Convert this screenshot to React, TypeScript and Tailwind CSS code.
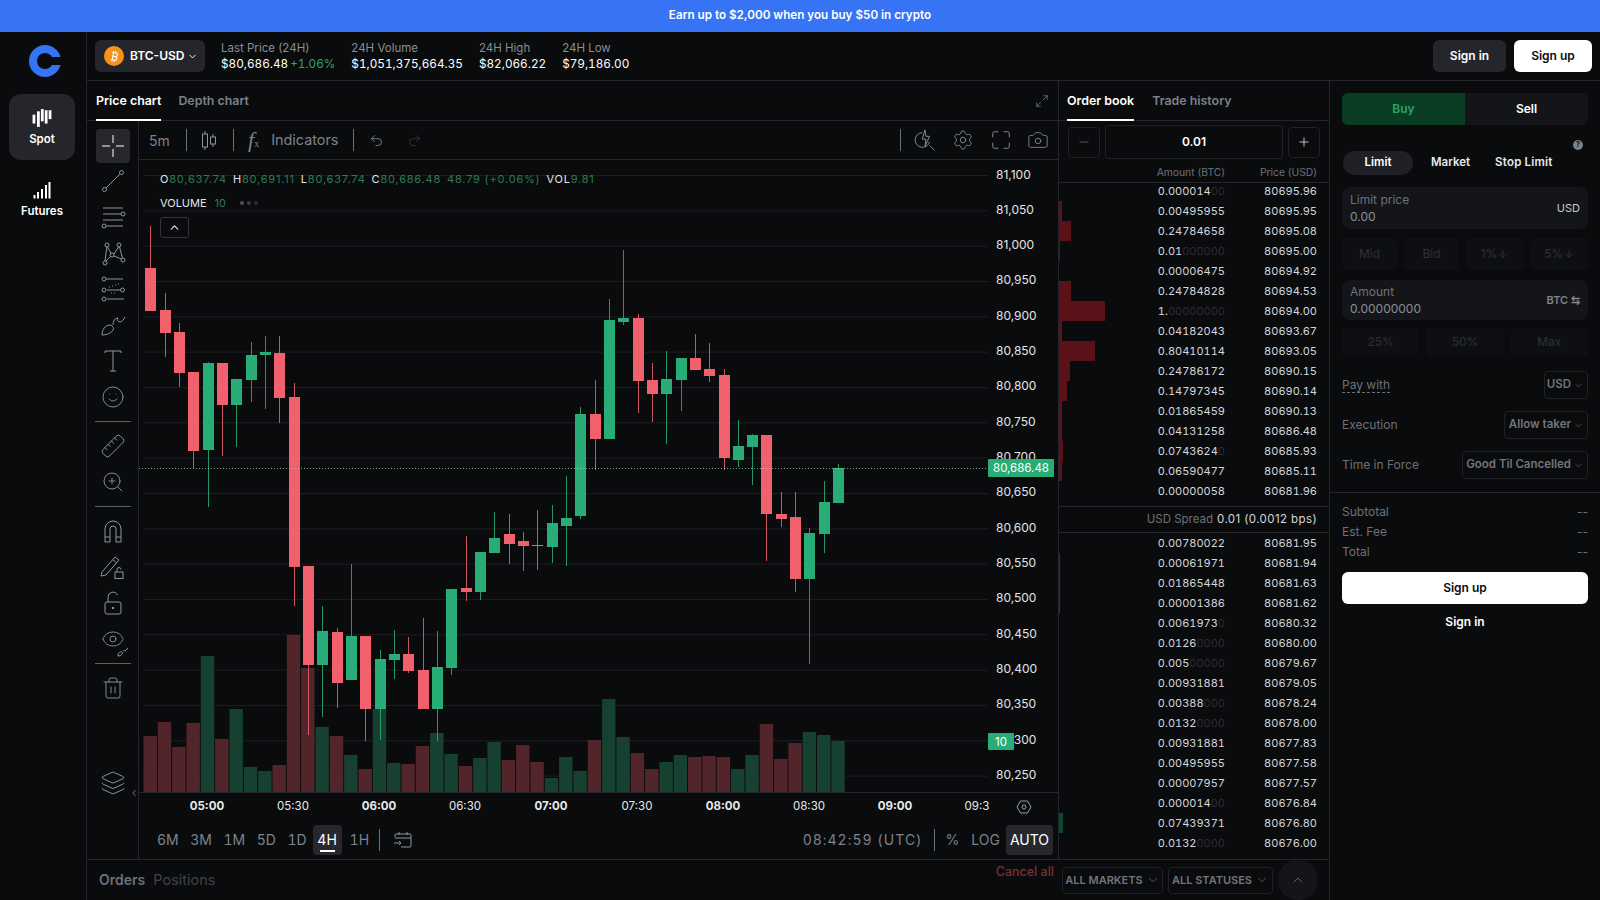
import { Camera, ChevronDown, ChevronUp, Maximize2, Minus, Plus, Redo2, Ruler, Settings, Smile, Trash2, Undo2, Layers, ZoomIn, Bitcoin, ChevronLeft, ArrowDown, Eye } from 'lucide-react';

// wickTop, bodyTop, bodyBottom, wickBottom, up? (page pixels)
const candles: [number, number, number, number, boolean][] = [
  [226, 268, 311, 311, false], [293, 310, 333, 357, false], [323, 332, 373, 387, false], [372, 372, 451, 468, false],
  [362, 363, 450, 507, true], [363, 363, 405, 456, false], [379, 379, 405, 447, true], [342, 355, 380, 402, true],
  [336, 352, 355, 409, true], [336, 353, 398, 423, false], [383, 397, 567, 606, false], [566, 566, 665, 735, false],
  [606, 631, 665, 717, true], [628, 632, 683, 708, false], [564, 636, 680, 680, true], [636, 636, 709, 741, false],
  [650, 659, 709, 740, true], [630, 654, 660, 679, true], [637, 654, 671, 673, false], [618, 670, 709, 709, false],
  [631, 667, 709, 741, true], [589, 589, 668, 675, true], [536, 588, 592, 601, false], [552, 552, 592, 600, true],
  [512, 538, 553, 553, true], [514, 534, 544, 564, false], [532, 541, 546, 571, false], [510, 545, 546, 570, false],
  [505, 523, 547, 563, true], [476, 518, 526, 566, true], [407, 414, 516, 519, true], [380, 414, 439, 470, false],
  [299, 320, 439, 439, true], [250, 318, 322, 325, true], [314, 318, 381, 413, false], [363, 380, 394, 422, false],
  [351, 379, 394, 444, true], [358, 358, 380, 411, true], [334, 358, 370, 370, false], [343, 369, 376, 382, false],
  [369, 375, 458, 470, false], [420, 446, 460, 467, true], [434, 435, 447, 485, true], [435, 435, 514, 561, false],
  [492, 514, 519, 527, false], [492, 517, 579, 592, false], [528, 533, 579, 664, true], [481, 502, 534, 553, true],
  [464, 468, 503, 503, true],
];

const volumes: [number, boolean][] = [
  [736, false], [722, false], [747, false], [723, false], [656, true], [739, false], [709, true], [767, true], [771, true],
  [765, false], [635, false], [668, false], [727, true], [736, false], [755, true], [769, false], [709, true], [763, true],
  [764, false], [746, false], [733, true], [754, true], [766, false], [758, true], [742, true], [760, false], [745, false],
  [762, false], [778, true], [757, true], [771, true], [740, false], [699, true], [737, true], [753, false], [769, false],
  [762, true], [755, true], [757, false], [756, false], [757, false], [769, true], [755, true], [724, false], [759, false],
  [743, false], [732, true], [735, true], [741, true],
];

const prices = ['81,100', '81,050', '81,000', '80,950', '80,900', '80,850', '80,800', '80,750', '80,700', '80,650', '80,600', '80,550', '80,500', '80,450', '80,400', '80,350', '80,300', '80,250'];

const times: [string, number, boolean][] = [
  ['05:00', 207, true], ['05:30', 293, false], ['06:00', 379, true], ['06:30', 465, false], ['07:00', 551, true],
  ['07:30', 637, false], ['08:00', 723, true], ['08:30', 809, false], ['09:00', 895, true], ['09:3', 977, false],
];

type Row = { amount: string; dim?: string; price: string; bar?: number };

const asks: Row[] = [
  { amount: '0.000014', dim: '00', price: '80695.96' },
  { amount: '0.00495955', price: '80695.95', bar: 3 },
  { amount: '0.24784658', price: '80695.08', bar: 12 },
  { amount: '0.01', dim: '000000', price: '80695.00', bar: 1 },
  { amount: '0.00006475', price: '80694.92' },
  { amount: '0.24784828', price: '80694.53', bar: 12 },
  { amount: '1.', dim: '00000000', price: '80694.00', bar: 46 },
  { amount: '0.04182043', price: '80693.67', bar: 3 },
  { amount: '0.80410114', price: '80693.05', bar: 36 },
  { amount: '0.24786172', price: '80690.15', bar: 11 },
  { amount: '0.14797345', price: '80690.14', bar: 8 },
  { amount: '0.01865459', price: '80690.13', bar: 3 },
  { amount: '0.04131258', price: '80686.48', bar: 3 },
  { amount: '0.0743624', dim: '0', price: '80685.93', bar: 4 },
  { amount: '0.06590477', price: '80685.11', bar: 3 },
  { amount: '0.00000058', price: '80681.96' },
];

const bids: Row[] = [
  { amount: '0.00780022', price: '80681.95' },
  { amount: '0.00061971', price: '80681.94', bar: 1 },
  { amount: '0.01865448', price: '80681.63', bar: 1 },
  { amount: '0.00001386', price: '80681.62', bar: 1 },
  { amount: '0.0061973', dim: '0', price: '80680.32' },
  { amount: '0.0126', dim: '0000', price: '80680.00' },
  { amount: '0.005', dim: '00000', price: '80679.67' },
  { amount: '0.00931881', price: '80679.05' },
  { amount: '0.00388', dim: '000', price: '80678.24' },
  { amount: '0.0132', dim: '0000', price: '80678.00' },
  { amount: '0.00931881', price: '80677.83' },
  { amount: '0.00495955', price: '80677.58' },
  { amount: '0.00007957', price: '80677.57' },
  { amount: '0.000014', dim: '00', price: '80676.84' },
  { amount: '0.07439371', price: '80676.80', bar: 4 },
  { amount: '0.0132', dim: '0000', price: '80676.00' },
];

function BookRow({ row, side }: { row: Row; side: 'ask' | 'bid' }) {
  return (
    <div className="relative flex h-5 items-center justify-end pr-[13px] text-[11px] tabular-nums text-[#d5d7dc]">
      {row.bar && (
        <div
          className={`absolute inset-y-0 left-0 ${side === 'ask' ? 'bg-[#5a1218]' : 'bg-[#0b4a30]'}`}
          style={{ width: row.bar }}
        />
      )}
      <span>
        {row.amount}
        <span className="text-[#2a2c32]">{row.dim}</span>
      </span>
      <span className="w-[92px] text-right">{row.price}</span>
    </div>
  );
}

function Chart() {
  const green = '#27ad75';
  const red = '#f0616d';
  return (
    <svg viewBox="139 160 919 660" className="block h-[660px] w-[919px]">
      {prices.map((p, i) => (
        <line key={p} x1={143} x2={988} y1={175.5 + i * 35.33} y2={175.5 + i * 35.33} stroke="#1c1e23" />
      ))}
      {volumes.map(([top, up], i) => (
        <rect key={i} x={143.5 + i * 14.33} y={top} width={13.4} height={792 - top} fill={up ? '#16402f' : '#52252b'} />
      ))}
      {candles.map(([wt, bt, bb, wb, up], i) => {
        const x = Math.round(150.3 + i * 14.33) + 0.5;
        return (
          <g key={i} fill={up ? green : red} stroke={up ? green : red}>
            <line x1={x} x2={x} y1={wt} y2={wb} strokeOpacity={0.85} />
            <rect x={x - 5.5} y={bt} width={11} height={bb - bt} stroke="none" />
          </g>
        );
      })}
      <line x1={139} x2={988} y1={468.5} y2={468.5} stroke="#a9d8c2" strokeOpacity={0.7} strokeDasharray="1 2" />
      {prices.map((p, i) => (
        <text key={p} x={996} y={178.5 + i * 35.33} fill="#e3e5e8" className="text-[12px]">
          {p}
        </text>
      ))}
      <rect x={988} y={459} width={66} height={18} rx={1} fill={green} />
      <text x={1021} y={472} textAnchor="middle" fill="#fff" className="text-[11.5px]">
        80,686.48
      </text>
      <rect x={988} y={733} width={26} height={17} rx={1} fill={green} />
      <text x={1001} y={746} textAnchor="middle" fill="#fff" className="text-[11.5px]">
        10
      </text>
      <line x1={139} x2={1058} y1={792.5} y2={792.5} stroke="#24262c" />
      {times.map(([t, x, bold]) => (
        <text key={t} x={x} y={810} textAnchor="middle" fill="#e8e9ec" className={bold ? 'text-[11.5px] font-bold' : 'text-[11.5px]'}>
          {t}
        </text>
      ))}
      {/* axis settings hex */}
      <path d="M1017 807l3.5-6h7l3.5 6-3.5 6h-7z" fill="none" stroke="#9aa0aa" />
      <circle cx={1024} cy={807} r={2} fill="none" stroke="#9aa0aa" />
    </svg>
  );
}

const toolStroke = { fill: 'none', stroke: '#8f949e', strokeWidth: 1 };

function ToolIcon({ children }: { children: React.ReactNode }) {
  return (
    <svg viewBox="0 0 28 28" className="h-7 w-7" {...toolStroke}>
      {children}
    </svg>
  );
}

function Cell({ children }: { children: React.ReactNode }) {
  return <div className="flex h-9 w-[34px] items-center justify-center text-[#8f949e]">{children}</div>;
}

function Rule() {
  return <div className="my-[6px] h-px w-9 bg-[#5b5f67]" />;
}

function SideTools() {
  return (
    <div className="relative flex w-[52px] shrink-0 flex-col items-center border-r border-[#24262c] pt-2">
      <div className="flex h-[34px] w-[34px] items-center justify-center rounded bg-[#26282e]">
        <svg viewBox="0 0 28 28" className="h-7 w-7" fill="none" stroke="#fff" strokeWidth={1}>
          <path d="M14 3v8M14 17v8M3 14h8M17 14h8" />
        </svg>
      </div>
      <Cell>
        <ToolIcon>
          <path d="M7 21L21 7" />
          <circle cx="5.5" cy="22.5" r="2" />
          <circle cx="22.5" cy="5.5" r="2" />
        </ToolIcon>
      </Cell>
      <Cell>
        <ToolIcon>
          <path d="M4 5h20M4 11h18M4 17h20M7 23h17" />
          <circle cx="24" cy="11" r="2" />
          <circle cx="5" cy="23" r="2" />
        </ToolIcon>
      </Cell>
      <Cell>
        <ToolIcon>
          <circle cx="6" cy="24" r="2" />
          <circle cx="8" cy="6" r="2" />
          <circle cx="13" cy="16" r="2" />
          <circle cx="20" cy="6" r="2" />
          <circle cx="24" cy="21" r="2" />
          <path d="M7 22l5-5M8.5 8L12 14.5M15 15l4.5-7M15 17l7.5 3M20.5 8l3 11M6 22L7.8 8" />
        </ToolIcon>
      </Cell>
      <Cell>
        <ToolIcon>
          <path d="M7 4h17M8 15h14M8 24h17" />
          <path d="M10 12h1M13 11h1M16 10h1M19 9h1M12 18h1M15 18h1" strokeDasharray="1 1" />
          <circle cx="5" cy="4" r="2" />
          <circle cx="5" cy="15" r="2" />
          <circle cx="23.5" cy="15" r="2" />
          <circle cx="5" cy="24" r="2" />
        </ToolIcon>
      </Cell>
      <Cell>
        <ToolIcon>
          <path d="M3 24c0-5 3-10 8-10 1.5 0 3.5 2 3.5 3.5C14 21 9 24 3 24zM14 14c0-4 2-7 5-7-1 2 0 4 2 4s4-3 5-5" />
        </ToolIcon>
      </Cell>
      <Cell>
        <ToolIcon>
          <path d="M6 6V4h16v2M14 4v20M11 24h6" />
        </ToolIcon>
      </Cell>
      <Cell>
        <Smile size={24} strokeWidth={0.9} />
      </Cell>
      <Rule />
      <Cell>
        <Ruler size={26} strokeWidth={0.9} className="-scale-x-100" />
      </Cell>
      <Cell>
        <ZoomIn size={24} strokeWidth={0.9} />
      </Cell>
      <Rule />
      <Cell>
        <ToolIcon>
          <path d="M6 25V12a8 8 0 0 1 16 0v13h-5V12a3 3 0 0 0-6 0v13zM6 20h5M17 20h5" />
        </ToolIcon>
      </Cell>
      <Cell>
        <ToolIcon>
          <path d="M3 19L16 4l4 3-13 15-5 1zM14 7l4 3" />
          <rect x="16" y="19" width="8" height="6.5" />
          <path d="M18 19v-2.5a2 2 0 0 1 4 0" />
        </ToolIcon>
      </Cell>
      <Cell>
        <ToolIcon>
          <rect x="6" y="13" width="16" height="12" rx="2" />
          <path d="M9 13V8a5 5 0 0 1 9.5-2" />
          <path d="M14 18v2" strokeWidth="2" />
        </ToolIcon>
      </Cell>
      <Cell>
        <div className="relative">
          <Eye size={24} strokeWidth={0.9} />
          <svg viewBox="0 0 12 10" className="absolute -bottom-1.5 -right-1 h-[10px] w-3" {...toolStroke}>
            <path d="M1 9c0-3 2-5 4-4 1 2-1 4-4 4zM6 4c1-1 2 0 2 0l3-3" />
          </svg>
        </div>
      </Cell>
      <Rule />
      <Cell>
        <Trash2 size={24} strokeWidth={0.9} />
      </Cell>
      <div className="mt-[59px]">
        <Cell>
          <Layers size={26} strokeWidth={0.9} />
        </Cell>
      </div>
      <ChevronLeft size={10} className="absolute bottom-[61px] -right-[1px] text-[#8f949e]" />
    </div>
  );
}

function Sep() {
  return <div className="h-[22px] w-px bg-[#6b6f77]" />;
}

function Legend() {
  const V = ({ children }: { children: React.ReactNode }) => <span className="text-[#2f7a55]">{children}</span>;
  return (
    <div className="absolute left-[21px] top-[11px] text-[11px] text-[#e3e5e8]">
      <div className="flex gap-[6px] tracking-[0.8px]">
        <span>O<V>80,637.74</V></span>
        <span>H<V>80,691.11</V></span>
        <span>L<V>80,637.74</V></span>
        <span>C<V>80,686.48</V></span>
        <V>48.79 (+0.06%)</V>
        <span>VOL<V>9.81</V></span>
      </div>
      <div className="mt-[7px] flex items-center gap-2">
        <span>VOLUME</span>
        <V>10</V>
        <span className="ml-1.5 flex gap-[3px]">
          <i className="h-1 w-1 rounded-full bg-[#4a4d54]" />
          <i className="h-1 w-1 rounded-full bg-[#3a3c42]" />
          <i className="h-1 w-1 rounded-full bg-[#2c2e33]" />
        </span>
      </div>
      <div className="mt-[6px] flex h-[21px] w-[29px] items-center justify-center rounded-[3px] border border-[#33353b]">
        <ChevronUp size={13} strokeWidth={2} />
      </div>
    </div>
  );
}

function ChartPanel() {
  return (
    <div className="flex w-[972px] shrink-0 flex-col border-r border-[#24262c]">
      <div className="flex h-10 shrink-0 items-stretch border-b border-[#24262c] pl-[9px] pr-[9px] text-[12.4px] font-semibold">
        <div className="relative flex items-center pt-px text-white">
          Price chart
          <div className="absolute inset-x-0 -bottom-px h-0.5 bg-white" />
        </div>
        <div className="ml-[17px] flex items-center pt-px text-[#7b808a]">Depth chart</div>
        <Maximize2 size={14} strokeWidth={1} className="ml-auto self-center text-[#9aa0aa]" />
      </div>
      <div className="flex min-h-0 flex-1">
        <SideTools />
        <div className="flex w-[919px] flex-col">
          <div className="flex h-[39px] shrink-0 items-center border-b border-[#24262c] pl-[10px] text-[14px] text-[#7d828c]">
            <span className="w-[25px]">5m</span>
            <div className="ml-[12px]"><Sep /></div>
            <svg viewBox="0 0 20 24" className="ml-[12px] h-6 w-5" fill="none" stroke="#8f949e">
              <path d="M6 3v3M6 19v3M14 6v3M14 16v3" />
              <rect x="3.5" y="6" width="5" height="13" />
              <rect x="11.5" y="9" width="5" height="7" />
            </svg>
            <div className="ml-[14px]"><Sep /></div>
            <span className="ml-[14px] font-['Liberation_Serif',serif] text-[22px] italic leading-none">
              f<span className="text-[10px] not-italic">x</span>
            </span>
            <span className="ml-[12px] w-[67px] whitespace-nowrap text-[14.4px]">Indicators</span>
            <div className="ml-[15px]"><Sep /></div>
            <Undo2 size={15} strokeWidth={1.2} className="ml-[15px] text-[#8f949e]" />
            <Redo2 size={15} strokeWidth={1.2} className="ml-[23px] text-[#3b3d43]" />
            <div className="ml-auto flex items-center pr-[9px]">
              <Sep />
              <svg viewBox="0 0 24 24" className="ml-[13px] h-[22px] w-[22px]" fill="none" stroke="#8f949e">
                <path d="M9 4a8 8 0 1 0 8 10M17 18l5 5M12 1l-3 10h4l-1 8 5-11h-4z" />
              </svg>
              <Settings size={22} strokeWidth={0.9} className="ml-[16px] text-[#8f949e]" />
              <svg viewBox="0 0 24 24" className="ml-[16px] h-[22px] w-[22px]" fill="none" stroke="#8f949e">
                <path d="M3 9V5a2 2 0 0 1 2-2h4M15 3h4a2 2 0 0 1 2 2v4M21 15v4a2 2 0 0 1-2 2h-4M9 21H5a2 2 0 0 1-2-2v-4" />
              </svg>
              <Camera size={22} strokeWidth={0.9} className="ml-[15px] text-[#8f949e]" />
            </div>
          </div>
          <div className="relative h-[660px] shrink-0">
            <Chart />
            <Legend />
          </div>
          <div className="flex flex-1 items-center text-[14px] tabular-nums text-[#7d828c]">
            <div className="ml-[18px] flex items-center gap-[11.5px]">
              <span>6M</span>
              <span>3M</span>
              <span>1M</span>
              <span>5D</span>
              <span>1D</span>
            </div>
            <div className="relative ml-[6px] flex h-[30px] w-[29px] items-center justify-center rounded bg-[#26282e] text-white">
              4H
              <div className="absolute bottom-[3px] h-0.5 w-[15px] bg-white" />
            </div>
            <span className="ml-[8px]">1H</span>
            <div className="ml-[10px]"><Sep /></div>
            <svg viewBox="0 0 20 20" className="ml-[13px] h-5 w-5" fill="none" stroke="#8f949e">
              <path d="M2 7V5a1 1 0 0 1 1-1h14a1 1 0 0 1 1 1v11a1 1 0 0 1-1 1H8M2 8h16M6 2v3M14 2v3M1 13h7M6 11l2 2-2 2" />
            </svg>
            <span className="ml-auto tracking-[1px]">08:42:59 (UTC)</span>
            <div className="ml-[11px]"><Sep /></div>
            <span className="ml-[11px]">%</span>
            <span className="ml-[12px]">LOG</span>
            <div className="ml-[6px] mr-[5px] flex h-[30px] w-[47px] items-center justify-center rounded bg-[#26282e] text-white">
              AUTO
            </div>
          </div>
        </div>
      </div>
    </div>
  );
}

function OrderBook() {
  return (
    <div className="flex w-[271px] shrink-0 flex-col">
      <div className="flex h-10 shrink-0 items-stretch border-b border-[#24262c] pl-2 text-[12.4px] font-semibold">
        <div className="relative flex items-center pt-px text-white">
          Order book
          <div className="absolute inset-x-0 -bottom-px h-0.5 bg-white" />
        </div>
        <div className="ml-[18px] flex items-center pt-px text-[#7b808a]">Trade history</div>
      </div>
      <div className="flex h-[42px] shrink-0 items-center gap-[5px] pl-[9px] pr-[10px]">
        <div className="flex h-[31px] w-[32px] items-center justify-center rounded border border-[#1f2126] text-[#6d717a]">
          <Minus size={14} strokeWidth={1.2} />
        </div>
        <div className="flex h-[34px] flex-1 items-center justify-center rounded border border-[#1f2126] text-[12px] font-semibold text-white">
          0.01
        </div>
        <div className="flex h-[31px] w-[32px] items-center justify-center rounded border border-[#1f2126] text-[#d5d7dc]">
          <Plus size={14} strokeWidth={1.5} />
        </div>
      </div>
      <div className="flex h-5 shrink-0 items-center justify-end border-b border-[#24262c] pr-[13px] text-[10.3px] text-[#6d717a]">
        <span>Amount (BTC)</span>
        <span className="w-[92px] text-right">Price (USD)</span>
      </div>
      <div className="-mt-[2px]">
        {asks.map((r) => (
          <BookRow key={r.price} row={r} side="ask" />
        ))}
      </div>
      <div className="mt-[5px] flex h-[27px] shrink-0 items-center justify-end border-y border-[#24262c] pr-[13px] text-[11.5px]">
        <span className="text-[#6d717a]">USD Spread</span>
        <span className="ml-1 tracking-[0.4px] text-[#d5d7dc]">0.01 (0.0012 bps)</span>
      </div>
      <div>
        {bids.map((r) => (
          <BookRow key={r.price} row={r} side="bid" />
        ))}
      </div>
    </div>
  );
}

function Select({ label, width }: { label: string; width: string }) {
  return (
    <div className={`flex h-7 items-center justify-end gap-[2px] rounded border border-[#1f2126] pr-[3px] text-[11.5px] font-semibold text-[#71757e] ${width}`}>
      {label}
      <ChevronDown size={11} strokeWidth={1.2} />
    </div>
  );
}

function Quick({ label, className }: { label: React.ReactNode; className: string }) {
  return (
    <div className={`flex items-center justify-center rounded bg-[#0e0f12] text-[12px] text-[#2e3035] ${className}`}>{label}</div>
  );
}

function OrderPanel() {
  return (
    <div className="flex w-[270px] shrink-0 flex-col">
      <div className="px-3 pt-[12px]">
        <div className="flex h-8 overflow-hidden rounded-md bg-[#141519] text-[12px] font-semibold">
          <div className="flex w-[123px] items-center justify-center bg-[#0a3d24] text-[#2fa36b]">Buy</div>
          <div className="flex flex-1 items-center justify-center text-white">Sell</div>
        </div>
        <div className="relative mt-[26px] flex h-6 items-center text-[11.5px] font-semibold text-[#e8e9ec]">
          <div className="ml-px flex h-6 w-[70px] items-center justify-center rounded-full bg-[#1e2025] text-white">Limit</div>
          <span className="ml-[18px]">Market</span>
          <span className="ml-[25px] tracking-[0.2px]">Stop Limit</span>
          <div className="absolute -top-[11px] right-[5px] flex h-[10px] w-[10px] items-center justify-center rounded-full bg-[#7b808a] text-[7px] font-bold text-[#0a0b0d]">?</div>
        </div>
        <div className="mt-[12px] flex h-[42px] items-center justify-between rounded-lg bg-[#141519] px-2">
          <div className="text-[12px] leading-[17px] text-[#6d717a]">
            <div>Limit price</div>
            <div className="text-[#8a8e96]">0.00</div>
          </div>
          <span className="text-[11px] text-[#c8cad0]">USD</span>
        </div>
        <div className="mt-[9px] flex h-8 gap-[7px]">
          <Quick label="Mid" className="w-[55px]" />
          <Quick label="Bid" className="w-[55px]" />
          <Quick label={<>1%<ArrowDown size={12} /></>} className="w-[58px]" />
          <Quick label={<>5%<ArrowDown size={12} /></>} className="w-[57px]" />
        </div>
        <div className="mt-[10px] flex h-10 items-center justify-between rounded-lg bg-[#141519] px-2">
          <div className="text-[12px] leading-[17px] text-[#6d717a]">
            <div>Amount</div>
            <div className="text-[#8a8e96]">0.00000000</div>
          </div>
          <span className="text-[11px] font-semibold text-[#7d828c]">BTC ⇆</span>
        </div>
        <div className="mt-2 flex h-7 gap-[7px]">
          <Quick label="25%" className="flex-1" />
          <Quick label="50%" className="flex-1" />
          <Quick label="Max" className="flex-1" />
        </div>
        <div className="mt-[15px] flex items-center justify-between text-[12px] text-[#6d717a]">
          <span className="border-b border-dashed border-[#6d717a] leading-[14px]">Pay with</span>
          <Select label="USD" width="w-[44px]" />
        </div>
        <div className="mt-3 flex items-center justify-between text-[12px] text-[#6d717a]">
          <span>Execution</span>
          <Select label="Allow taker" width="w-[84px]" />
        </div>
        <div className="mt-3 flex items-center justify-between text-[12px] text-[#6d717a]">
          <span>Time in Force</span>
          <Select label="Good Til Cancelled" width="w-[126px]" />
        </div>
      </div>
      <div className="mt-[13px] h-px bg-[#24262c]" />
      <div className="px-3 pt-[9px] text-[12px] leading-5 text-[#6d717a]">
        <div className="flex justify-between"><span>Subtotal</span><span>--</span></div>
        <div className="flex justify-between"><span>Est. Fee</span><span>--</span></div>
        <div className="flex justify-between"><span>Total</span><span>--</span></div>
        <div className="mt-[10px] flex h-8 items-center justify-center rounded-md bg-white text-[12px] font-semibold text-[#0a0b0d]">Sign up</div>
        <div className="mt-[8px] text-center text-[12px] font-semibold text-white">Sign in</div>
      </div>
    </div>
  );
}

function Stat({ label, children }: { label: string; children: React.ReactNode }) {
  return (
    <div className="leading-4">
      <div className="text-[11.5px] text-[#8a8e96]">{label}</div>
      <div className="text-[11.75px] tabular-nums text-white">{children}</div>
    </div>
  );
}

export default function App() {
  return (
    <div className="flex h-[900px] w-[1600px] flex-col overflow-hidden bg-[#0a0b0d] font-['Inter',sans-serif]">
      <div className="flex h-8 shrink-0 items-center justify-center bg-[#3773f5] text-[11.7px] font-semibold text-white">
        Earn up to $2,000 when you buy $50 in crypto
      </div>
      <div className="flex min-h-0 flex-1">
        {/* Left rail */}
        <div className="flex w-[87px] shrink-0 flex-col items-center border-r border-[#24262c] pt-[13px]">
          <svg viewBox="0 0 32 32" className="ml-[4px] h-8 w-8">
            <circle cx="16" cy="16" r="16" fill="#3773f5" />
            <circle cx="16" cy="16" r="8" fill="#0a0b0d" />
            <rect x="16" y="12" width="16" height="8" fill="#0a0b0d" />
          </svg>
          <div className="mr-[2px] mt-[17px] flex h-[66px] w-[66px] flex-col items-center justify-center gap-[3px] rounded-xl bg-[#24262b] pt-[2px] text-[11.5px] font-semibold text-white">
            <svg viewBox="0 0 18 18" className="h-5 w-5" fill="#fff">
              <rect x="0.5" y="6" width="2.5" height="8" />
              <rect x="4.5" y="3" width="2.5" height="14" />
              <rect x="8" y="1" width="2.5" height="11" />
              <rect x="11.5" y="2" width="2.5" height="12" />
              <rect x="15" y="2" width="2.5" height="8" />
            </svg>
            Spot
          </div>
          <div className="mr-[2px] mt-[21px] flex flex-col items-center gap-1 text-[11.5px] font-semibold text-white">
            <svg viewBox="0 0 18 18" className="h-[18px] w-[18px]" fill="#fff">
              <rect x="0.5" y="14" width="2" height="3.5" />
              <rect x="4" y="11" width="2" height="6.5" />
              <rect x="8" y="8" width="2" height="9.5" />
              <rect x="12" y="4" width="2" height="13.5" />
              <rect x="15.5" y="1" width="2" height="16.5" />
            </svg>
            Futures
          </div>
        </div>
        <div className="flex min-w-0 flex-1 flex-col">
          {/* Header */}
          <div className="flex h-[49px] shrink-0 items-center border-b border-[#24262c] pl-2 pr-2">
            <div className="flex h-8 w-[110px] items-center rounded-md bg-[#24262b] pl-[9px] text-[12px] font-semibold text-white">
              <span className="flex h-5 w-5 items-center justify-center rounded-full bg-[#f7931a]">
                <Bitcoin size={13} strokeWidth={2} />
              </span>
              <span className="ml-[6px]">BTC-USD</span>
              <ChevronDown size={11} className="ml-[2px]" />
            </div>
            <div className="ml-4 flex gap-4">
              <Stat label="Last Price (24H)">
                $80,686.48<span className="ml-[2px] text-[#2fa36b]">+1.06%</span>
              </Stat>
              <Stat label="24H Volume">$1,051,375,664.35</Stat>
              <Stat label="24H High">$82,066.22</Stat>
              <Stat label="24H Low">$79,186.00</Stat>
            </div>
            <div className="ml-auto flex gap-2 text-[12px] font-semibold">
              <div className="flex h-8 w-[73px] items-center justify-center rounded-md bg-[#24262b] text-white">Sign in</div>
              <div className="flex h-8 w-[78px] items-center justify-center rounded-md bg-white text-[#0a0b0d]">Sign up</div>
            </div>
          </div>
          {/* Main */}
          <div className="flex min-h-0 flex-1">
            <div className="flex w-[1243px] shrink-0 flex-col border-r border-[#24262c]">
              <div className="flex h-[779px] shrink-0 border-b border-[#24262c]">
                <ChartPanel />
                <OrderBook />
              </div>
              <div className="relative flex flex-1 items-center pl-3 pr-[11px]">
                <span className="mb-px text-[14px] font-semibold text-[#6d717a]">Orders</span>
                <span className="mb-px ml-2 text-[14.5px] text-[#3f4248]">Positions</span>
                <div className="ml-auto flex items-center gap-[5px] text-[11px] font-semibold text-[#71757e]">
                  <span className="mb-[16px] mr-[3px] text-[12.5px] font-medium text-[#7a3035]">Cancel all</span>
                  <div className="flex h-[27px] w-[101px] items-center justify-center gap-[3px] rounded border border-[#1f2126]">
                    ALL MARKETS <ChevronDown size={14} strokeWidth={1.2} />
                  </div>
                  <div className="flex h-[27px] w-[105px] items-center justify-center gap-[3px] rounded border border-[#1f2126]">
                    ALL STATUSES <ChevronDown size={14} strokeWidth={1.2} />
                  </div>
                  <div className="flex h-10 w-10 items-center justify-center rounded-full bg-[#141519]">
                    <ChevronUp size={16} strokeWidth={1.2} />
                  </div>
                </div>
              </div>
            </div>
            <OrderPanel />
          </div>
        </div>
      </div>
    </div>
  );
}
